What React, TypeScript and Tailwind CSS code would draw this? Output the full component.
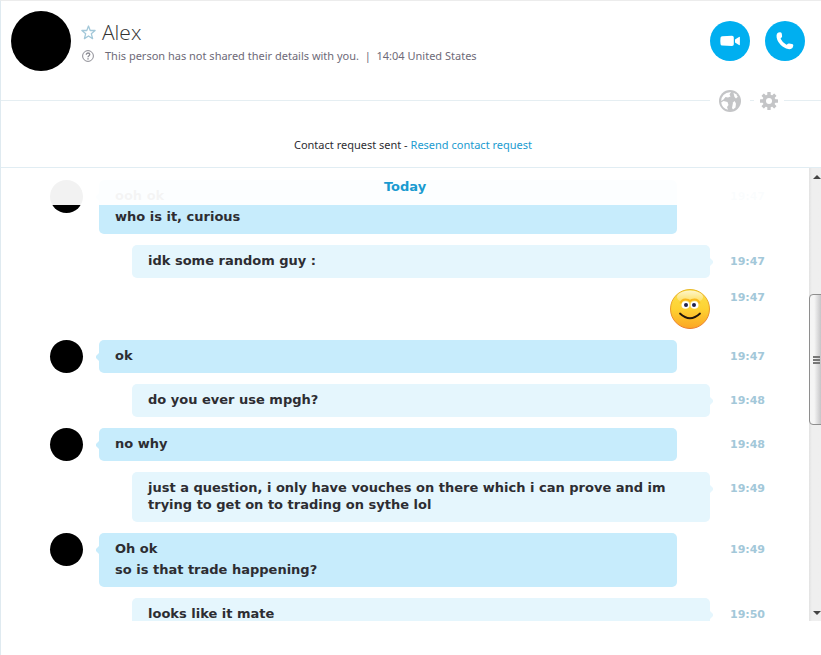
import type { ReactNode } from "react"
import { clsx } from "clsx"

interface Message {
  id: number
  from: "them" | "me"
  lines: string[]
  time: string
  smile?: boolean
}

const MESSAGES: Message[] = [
  { id: 1, from: "them", lines: ["ooh ok", "who is it, curious"], time: "19:47" },
  { id: 2, from: "me", lines: ["idk some random guy :"], time: "19:47" },
  { id: 3, from: "me", lines: [], time: "19:47", smile: true },
  { id: 4, from: "them", lines: ["ok"], time: "19:47" },
  { id: 5, from: "me", lines: ["do you ever use mpgh?"], time: "19:48" },
  { id: 6, from: "them", lines: ["no why"], time: "19:48" },
  {
    id: 7,
    from: "me",
    lines: [
      "just a question, i only have vouches on there which i can prove and im trying to get on to trading on sythe lol",
    ],
    time: "19:49",
  },
  { id: 8, from: "them", lines: ["Oh ok", "so is that trade happening?"], time: "19:49" },
  { id: 9, from: "me", lines: ["looks like it mate"], time: "19:50" },
]

function StarIcon() {
  return (
    <svg width="15" height="15" viewBox="0 0 15 15" fill="none" stroke="#a3c8d9" strokeWidth="1.3">
      <path d="M7.500 1 9.200 5.500h4.900l-3.800 3.200 1.300 4.900-4.100-2.600-4.100 2.600 1.300-4.900L.9 5.500h4.900z" strokeLinejoin="round" />
    </svg>
  )
}

function UnknownIcon() {
  return (
    <svg width="12" height="12" viewBox="0 0 12 12" fill="none" stroke="#8c8c94">
      <circle cx="6" cy="6" r="5.400" strokeWidth="1" />
      <path d="M4.300 4.700c0-2.300 3.500-2.200 3.500-.1C7.800 5.800 6 5.800 6 7.300" strokeWidth="1.300" />
      <path d="M6 8.200v1.300" strokeWidth="1.400" />
    </svg>
  )
}

function VideoIcon() {
  return (
    <svg width="20" height="12" viewBox="0 0 20 12" fill="#fff">
      <path d="M2.200 1.200 12 .8q1.800 0 1.800 1.800v6.600q0 1.800-1.800 1.800l-9.800-.4Q.6 10.600.5 9L.3 6 .5 2.800q.1-1.500 1.700-1.600z" />
      <path d="M15 4.600 19 1.900q.8-.4.9.6v7q-.1 1-.9.6L15 7.400z" />
    </svg>
  )
}

function PhoneIcon() {
  return (
    <svg width="18" height="18" viewBox="0 0 18 18" fill="#fff">
      <path d="M1.300 1.200Q2.400.1 4.300.2q1.400.2 1.500 1.500l.3 2.600q0 1-.9 1.500-.8.5-.4 1.300 1.600 3.500 5.300 5.400.8.4 1.400-.4.600-.8 1.600-.6l2.900.5q1.500.3 1.300 1.700-.3 2.700-2.600 3.300-3.800.7-7.800-2.300Q1.500 10.800.6 5.200.2 2.500 1.300 1.200z" />
    </svg>
  )
}

function GlobeIcon() {
  return (
    <svg width="22" height="22" viewBox="0 0 22 22">
      <circle cx="11" cy="11" r="11" fill="#c4c5c7" />
      <g fill="#fff">
        <path d="M7.500 3 12 2l-1.500 2.500 1 2L9 7.500 6.500 7l-2 2.500-2.300 1.500Q2.200 7.500 4.500 5z" />
        <path d="M2.200 12.500 4.500 11l4 1 1 3-1.500 2 1 2.800Q3 18.500 2.200 12.500z" />
        <path d="M14.500 2.700q3 1 4.300 4L17 8.500 15.500 7 15 5z" />
        <path d="M14 12.500 15.500 11l1.500 2.500-.5 4-2.500 2-1-1.500z" />
      </g>
    </svg>
  )
}

function GearIcon() {
  return (
    <svg width="18" height="18" viewBox="0 0 18 18">
      <g fill="#c4c5c7">
        <rect x="7.300" y="0" width="3.400" height="18" rx="0.500" />
        <rect x="7.300" y="0" width="3.400" height="18" rx="0.500" transform="rotate(45 9 9)" />
        <rect x="7.300" y="0" width="3.400" height="18" rx="0.500" transform="rotate(90 9 9)" />
        <rect x="7.300" y="0" width="3.400" height="18" rx="0.500" transform="rotate(135 9 9)" />
        <circle cx="9" cy="9" r="6.500" />
      </g>
      <circle cx="9" cy="9" r="3" fill="#fff" />
    </svg>
  )
}

function Smiley() {
  return (
    <svg width="40" height="40" viewBox="0 0 40 40" role="img" aria-label="Smile">
      <defs>
        <linearGradient id="face" x1="0" y1="0" x2="0" y2="1">
          <stop offset="0" stopColor="#fbe04c" />
          <stop offset="0.5" stopColor="#fed232" />
          <stop offset="1" stopColor="#fba524" />
        </linearGradient>
        <linearGradient id="rim" x1="0" y1="0" x2="0" y2="1">
          <stop offset="0" stopColor="#e8b828" />
          <stop offset="1" stopColor="#ec7a2e" />
        </linearGradient>
        <linearGradient id="shine" x1="0" y1="0" x2="0" y2="1">
          <stop offset="0" stopColor="#fff" stopOpacity="0.700" />
          <stop offset="1" stopColor="#fff" stopOpacity="0.100" />
        </linearGradient>
      </defs>
      <circle cx="20" cy="20" r="19.500" fill="url(#face)" stroke="url(#rim)" />
      <ellipse cx="20" cy="8" rx="13" ry="6.500" fill="url(#shine)" />
      <path d="M10.500 14.500q1-4 5-4 3 0 4.500 1.500 1.500-1.500 4.500-1.500 4 0 5 4" fill="none" stroke="#f9b81c" strokeWidth="2" />
      <ellipse cx="15.500" cy="16" rx="4" ry="3.800" fill="#fff" />
      <ellipse cx="24.500" cy="16" rx="4" ry="3.800" fill="#fff" />
      <circle cx="16" cy="16" r="2" fill="#1f2350" />
      <circle cx="24" cy="16" r="2" fill="#1f2350" />
      <path d="M10 24.500q10 9.500 20 0" fill="none" stroke="#20150c" strokeWidth="1.800" strokeLinecap="round" />
    </svg>
  )
}

function CallButton({ label, children }: { label: string; children: ReactNode }) {
  return (
    <button
      type="button"
      aria-label={label}
      className="flex size-10 items-center justify-center rounded-full bg-[#00aff0]"
    >
      {children}
    </button>
  )
}

function Header() {
  return (
    <header className="flex items-start justify-between pt-2.5 pr-4 pl-2.5">
      <div className="flex gap-2.5">
        <div className="size-15 rounded-full bg-black" />
        <div className="pt-[7px]">
          <div className="flex h-7 items-center gap-1.5">
            <button type="button" aria-label="Add to favorites">
              <StarIcon />
            </button>
            <h1 className="font-['Open_Sans',sans-serif] text-[21px] leading-7 font-light text-[#333]">Alex</h1>
          </div>
          <div className="flex h-5 items-center gap-[11px] pl-px text-[#6e6a78]">
            <UnknownIcon />
            <p className="text-[11px] leading-5 whitespace-pre">
              This person has not shared their details with you.{"  "}|{"  "}14:04 United States
            </p>
          </div>
        </div>
      </div>
      <div className="flex gap-[15px] pt-2.5">
        <CallButton label="Video call">
          <VideoIcon />
        </CallButton>
        <CallButton label="Call">
          <PhoneIcon />
        </CallButton>
      </div>
    </header>
  )
}

function Toolbar() {
  return (
    <div className="flex h-6 items-center">
      <div className="h-px flex-1 bg-[#e5eef2]" />
      <button type="button" aria-label="Language" className="px-[9px] pt-0.5">
        <GlobeIcon />
      </button>
      <div className="h-px w-1 bg-[#e5eef2]" />
      <button type="button" aria-label="Settings" className="px-1.5 pt-0.5">
        <GearIcon />
      </button>
      <div className="h-px w-[37px] bg-[#e5eef2]" />
    </div>
  )
}

function MessageRow({ message }: { message: Message }) {
  const mine = message.from === "me"

  return (
    <li className="flex items-start">
      <div className={clsx("mr-4 size-[33px] shrink-0 rounded-full", !mine && "bg-black")} />
      <div className={clsx("min-w-0 flex-1", mine ? "pl-[33px]" : "pr-[33px]")}>
        {message.smile ? (
          <div className="flex justify-end">
            <Smiley />
          </div>
        ) : (
          <div
            className={clsx(
              "relative flex flex-col gap-1 rounded-[5px] px-4 pt-[7px] pb-[9px] text-[13px] leading-[17px] font-bold text-[#2d2d32]",
              mine ? "bg-[#e5f6fd]" : "bg-[#c7ecfc]",
            )}
          >
            <svg
              width="3"
              height="8"
              viewBox="0 0 3 8"
              className={clsx("absolute top-[13px]", mine ? "left-full" : "right-full")}
            >
              {mine ? (
                <path d="M0 0 3 3v2L0 8z" fill="#e5f6fd" />
              ) : (
                <path d="M3 0 0 3v2l3 3z" fill="#c7ecfc" />
              )}
            </svg>
            {message.lines.map((line) => (
              <p key={line}>{line}</p>
            ))}
          </div>
        )}
      </div>
      <time
        className={clsx(
          "ml-5 w-[79px] shrink-0 text-[11px] leading-[18px] font-bold text-[#a3c8d9]",
          !message.smile && "pt-2",
        )}
      >
        {message.time}
      </time>
    </li>
  )
}

function Scrollbar() {
  return (
    <div className="flex w-3 shrink-0 flex-col overflow-hidden bg-linear-to-r from-[#e2e2e2] to-[#efefef] to-25%">
      <svg width="12" height="17" viewBox="0 0 12 17" className="shrink-0">
        <path d="M4 11 8 7l4 4z" fill="#444" />
      </svg>
      <div className="h-[109px]" />
      <div className="flex h-[131px] w-4 shrink-0 items-center rounded-sm border border-[#8e8e8e] bg-linear-to-r from-[#f5f5f5] from-30% to-[#c4c4c6] to-80% pl-[3px]">
        <svg width="7" height="8" viewBox="0 0 7 8" fill="#777">
          <path d="M0 0h7v2H0zM0 3h7v2H0zM0 6h7v2H0z" />
        </svg>
      </div>
      <div className="flex-1" />
      <svg width="12" height="17" viewBox="0 0 12 17" className="shrink-0">
        <path d="M4 7h8l-4 4z" fill="#444" />
      </svg>
    </div>
  )
}

export default function App() {
  return (
    <div className="flex h-screen flex-col border-t border-l border-t-[#ececec] border-l-[#dfeaf0] bg-white font-['Noto_Sans',sans-serif]">
      <Header />
      <div className="pt-[17px]">
        <Toolbar />
      </div>
      <p className="border-b border-[#e1edf3] pt-6 pb-[13px] pl-1 text-center text-[11px] leading-[18px] text-[#2d2d32]">
        Contact request sent -{" "}
        <a href="#resend" className="text-[#1a9bd0]">
          Resend contact request
        </a>
      </p>

      <main className="flex min-h-0 flex-1 font-['DejaVu_Sans',sans-serif]">
        <div className="relative min-w-0 flex-1 overflow-hidden">
          <ul className="flex flex-col gap-[11px] pt-3 pl-[49px]">
            {MESSAGES.map((message) => (
              <MessageRow key={message.id} message={message} />
            ))}
          </ul>
          <h2 className="absolute inset-x-0 top-0 bg-white/95 text-center text-[13px] leading-[37px] font-bold text-[#1a9bd0]">
            Today
          </h2>
        </div>
        <Scrollbar />
      </main>
      <footer className="h-[34px] shrink-0" />
    </div>
  )
}
